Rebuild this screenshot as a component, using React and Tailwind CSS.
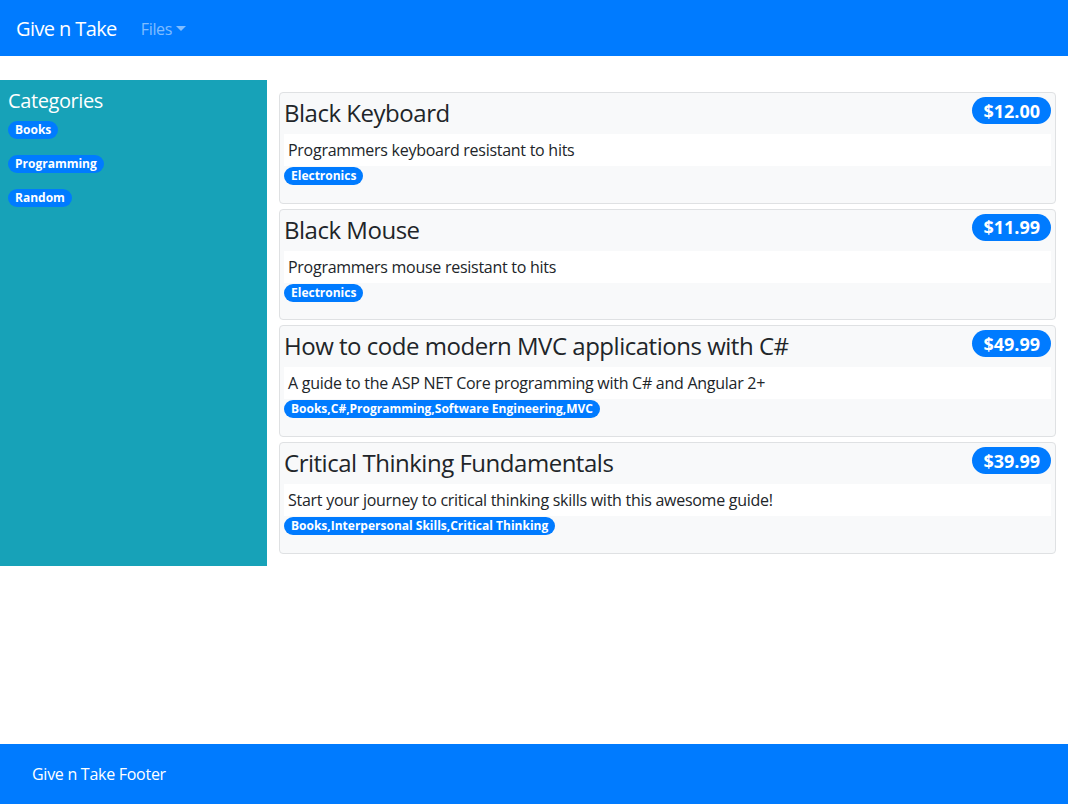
import React from 'react';

const products = [
  { title: 'Black Keyboard', price: '$12.00', desc: 'Programmers keyboard resistant to hits', tags: 'Electronics' },
  { title: 'Black Mouse', price: '$11.99', desc: 'Programmers mouse resistant to hits', tags: 'Electronics' },
  {
    title: 'How to code modern MVC applications with C#',
    price: '$49.99',
    desc: 'A guide to the ASP NET Core programming with C# and Angular 2+',
    tags: 'Books,C#,Programming,Software Engineering,MVC',
  },
  {
    title: 'Critical Thinking Fundamentals',
    price: '$39.99',
    desc: 'Start your journey to critical thinking skills with this awesome guide!',
    tags: 'Books,Interpersonal Skills,Critical Thinking',
  },
];

const categories = ['Books', 'Programming', 'Random'];

function Badge({ children }) {
  return (
    <span className="inline-flex items-center h-[18px] px-[7px] rounded-full bg-[#007bff] text-white text-[12px] font-bold leading-none whitespace-nowrap">
      {children}
    </span>
  );
}

function ProductCard({ item }) {
  return (
    <div className="h-[111.7px] border border-[#dfe1e3] rounded-[4px] bg-[#f8f9fa] p-1">
      <div className="flex justify-between items-start">
        <h4 className="text-[24px] leading-[29px] mt-px mb-[7px] tracking-[-0.02em] text-[#212529]">{item.title}</h4>
        <span className="inline-flex items-center h-[27px] px-[11px] rounded-full bg-[#007bff] text-white text-[18px] font-bold leading-none">
          {item.price}
        </span>
      </div>
      <div className="bg-white px-1 py-1 text-[16px] leading-6 tracking-[-0.017em] text-[#212529]">{item.desc}</div>
      <div className="flex mt-px">
        <Badge>{item.tags}</Badge>
      </div>
    </div>
  );
}

export default function App() {
  return (
    <div className="min-h-screen flex flex-col bg-white" style={{ fontFamily: '"Open Sans", "Noto Sans", sans-serif' }}>
      <nav className="h-14 bg-[#007bff] flex items-center px-4 pt-px">
        <span className="text-white text-[20px] leading-none tracking-[-0.03em]">Give n Take</span>
        <span className="ml-6 flex items-center text-white/50 text-[16px] tracking-[-0.02em]">
          Files
          <span className="ml-[4px] w-0 h-0 border-x-[5px] border-x-transparent border-t-[5px] border-t-white/50" />
        </span>
      </nav>

      <div className="mt-6 flex items-start">
        <aside className="w-[267px] h-[486px] bg-[#17a2b8] px-2 pt-[9px]">
          <h5 className="text-white text-[20px] leading-6 mb-2 tracking-[-0.02em]">Categories</h5>
          <div className="flex flex-col items-start gap-4">
            {categories.map((c) => (
              <Badge key={c}>{c}</Badge>
            ))}
          </div>
        </aside>
        <main className="flex-1 px-3 pt-3 flex flex-col gap-[5px]">
          {products.map((p) => (
            <ProductCard key={p.title} item={p} />
          ))}
        </main>
      </div>

      <footer className="mt-auto h-[60px] bg-[#007bff] flex items-center px-8 text-white text-[16px] tracking-[-0.017em]">
        Give n Take Footer
      </footer>
    </div>
  );
}
